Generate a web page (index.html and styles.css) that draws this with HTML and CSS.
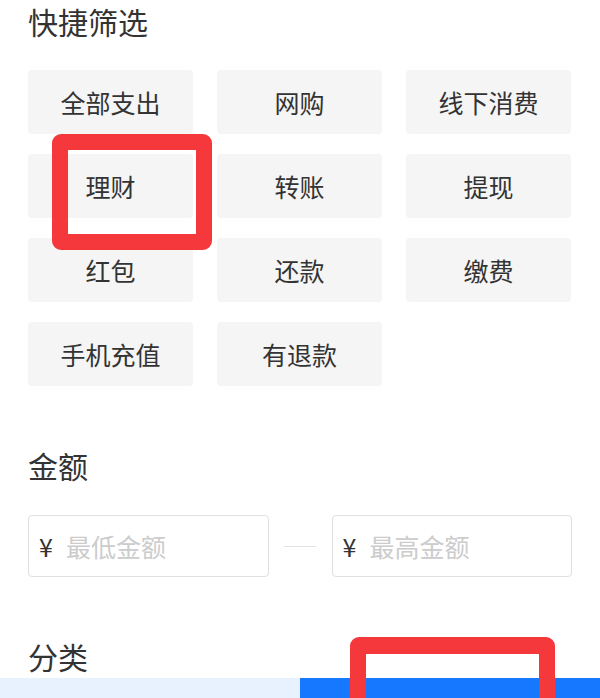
FILE: index.html
```html
<!DOCTYPE html>
<html lang="zh-CN">
<head>
<meta charset="utf-8">
<title>快捷筛选</title>
<link rel="stylesheet" href="styles.css">
</head>
<body>
<div class="page">
  <h2 class="title title-first">快捷筛选</h2>
  <div class="grid">
    <div class="chip">全部支出</div>
    <div class="chip">网购</div>
    <div class="chip">线下消费</div>
    <div class="chip">理财</div>
    <div class="chip">转账</div>
    <div class="chip">提现</div>
    <div class="chip">红包</div>
    <div class="chip">还款</div>
    <div class="chip">缴费</div>
    <div class="chip">手机充值</div>
    <div class="chip">有退款</div>
  </div>

  <h2 class="title title-amount">金额</h2>
  <div class="range">
    <div class="field"><span class="yen">¥</span><span class="ph">最低金额</span></div>
    <div class="sep"><span class="sep-line"></span></div>
    <div class="field"><span class="yen">¥</span><span class="ph">最高金额</span></div>
  </div>

  <h2 class="title title-cat">分类</h2>
  <div class="bar">
    <div class="bar-left"></div>
    <div class="bar-right"></div>
  </div>

  <div class="mark mark-1"></div>
  <div class="mark mark-2"></div>
</div>
</body>
</html>
```

FILE: styles.css
```css
html, body {
  margin: 0;
  padding: 0;
  background: #ffffff;
}
body {
  font-family: "Noto Sans CJK SC", "Noto Sans", sans-serif;
  color: #333333;
  overflow: hidden;
}
.page {
  position: relative;
  width: 600px;
  height: 698px;
  overflow: hidden;
  padding-top: 6px;
  box-sizing: border-box;
}
.title {
  margin: 0 0 0 28px;
  font-size: 30px;
  line-height: 30px;
  font-weight: 400;
  color: #333333;
}
.grid {
  margin: 34px 29px 0 28px;
  display: grid;
  grid-template-columns: repeat(3, 165px);
  column-gap: 24px;
  row-gap: 20px;
}
.chip {
  height: 64px;
  background: #f5f5f5;
  border-radius: 4px;
  display: flex;
  align-items: center;
  justify-content: center;
  font-size: 25px;
  color: #333333;
}
.title-amount {
  margin-top: 64px;
}
.range {
  margin: 35px 28px 0 28px;
  display: flex;
  align-items: center;
}
.field {
  flex: 1;
  height: 62px;
  box-sizing: border-box;
  border: 1px solid #e0e0e0;
  border-radius: 4px;
  display: flex;
  align-items: center;
  padding-left: 10px;
  gap: 13px;
  font-size: 25px;
}
.yen {
  color: #333333;
}
.ph {
  color: #cccccc;
}
.sep {
  width: 63px;
  display: flex;
  justify-content: center;
}
.sep-line {
  width: 32px;
  height: 1px;
  background: #e3e3e3;
}
.title-cat {
  margin-top: 64px;
}
.bar {
  margin-top: 7px;
  display: flex;
  height: 20px;
}
.bar-left {
  flex: 1;
  background: #e8f2fe;
}
.bar-right {
  flex: 1;
  background: #1677ff;
}
.mark {
  position: absolute;
  border: 16px solid #f5383c;
  border-radius: 9px;
  box-sizing: border-box;
}
.mark-1 {
  left: 52px;
  top: 134px;
  width: 160px;
  height: 116px;
}
.mark-2 {
  left: 350px;
  top: 637px;
  width: 205px;
  height: 120px;
  border-width: 17px 16px;
}
```
